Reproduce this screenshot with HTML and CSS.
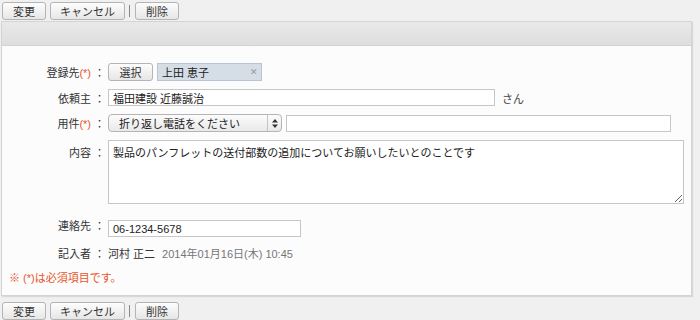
FILE: index.html
```html
<!DOCTYPE html>
<html lang="ja">
<head>
    <meta charset="UTF-8">
    <title>予定の変更</title>
    <link rel="stylesheet" href="styles.css">
</head>
<body>
    <div class="toolbar">
        <button class="btn btn-sm">変更</button>
        <button class="btn btn-lg">キャンセル</button>
        <span class="sep"></span>
        <button class="btn btn-sm">削除</button>
    </div>

    <div class="panel">
        <div class="panel-head"></div>
        <div class="panel-body">
            <div class="form">
                <div class="label">登録先<span class="req">(*)</span></div>
                <div class="colon">：</div>
                <div class="field">
                    <button class="btn btn-pick">選択</button>
                    <span class="chip">上田 恵子<span class="chip-x">✕</span></span>
                </div>

                <div class="label">依頼主</div>
                <div class="colon">：</div>
                <div class="field">
                    <input class="input input-client" type="text" value="福田建設 近藤誠治">
                    <span class="suffix">さん</span>
                </div>

                <div class="label">用件<span class="req">(*)</span></div>
                <div class="colon">：</div>
                <div class="field">
                    <div class="select">
                        <span>折り返し電話をください</span>
                        <span class="select-arrow">
                            <svg width="6" height="9" viewBox="0 0 6 9"><path d="M3 0 L6 3.5 H0 Z M3 9 L6 5.5 H0 Z" fill="#333"/></svg>
                        </span>
                    </div>
                    <input class="input input-subject" type="text">
                </div>

                <div class="label label-top">内容</div>
                <div class="colon label-top">：</div>
                <div class="field">
                    <textarea class="textarea">製品のパンフレットの送付部数の追加についてお願いしたいとのことです</textarea>
                </div>

                <div class="label">連絡先</div>
                <div class="colon">：</div>
                <div class="field field-gap">
                    <input class="input input-tel" type="text" value="06-1234-5678">
                </div>

                <div class="label">記入者</div>
                <div class="colon">：</div>
                <div class="field">
                    <span class="writer">河村 正二</span>
                    <span class="stamp">2014年01月16日(木) 10:45</span>
                </div>
            </div>
            <p class="note">※ (*)は必須項目です。</p>
        </div>
    </div>

    <div class="toolbar toolbar-bottom">
        <button class="btn btn-sm">変更</button>
        <button class="btn btn-lg">キャンセル</button>
        <span class="sep"></span>
        <button class="btn btn-sm">削除</button>
    </div>
</body>
</html>
```

FILE: styles.css
```css
body {
    margin: 0;
    padding: 0 8px 0 1px;
    background-color: #f0f0f0;
    font-family: "Liberation Sans", "Noto Sans CJK JP", sans-serif;
    font-size: 11px;
    color: #333;
}

.toolbar {
    display: flex;
    align-items: center;
    height: 21px;
    padding-left: 1px;
}

.toolbar-bottom {
    margin-top: 4px;
}

.btn {
    height: 18px;
    padding: 0;
    border: 1px solid #b4b4b4;
    border-radius: 3px;
    background: linear-gradient(#fdfdfd, #e6e6e6);
    font-family: "Liberation Sans", "Noto Sans CJK JP", sans-serif;
    font-size: 11px;
    color: #333;
    cursor: pointer;
}

.btn-sm {
    width: 44px;
}

.btn-lg {
    width: 75px;
    margin-left: 4px;
}

.sep {
    width: 1px;
    height: 12px;
    background-color: #888;
    margin: 0 5px 0 4px;
}

.panel {
    border: 1px solid #d4d4d4;
    background-color: #fcfcfc;
    box-shadow: 1px 1px 1px #d8d8d8;
}

.panel-head {
    height: 23px;
    background: linear-gradient(#e9e9e9, #dedede);
    border-bottom: 1px solid #d2d2d2;
}

.panel-body {
    padding: 17px 0 10px 0;
}

.form {
    display: grid;
    grid-template-columns: 89px 17px 1fr;
    row-gap: 8px;
    align-items: center;
}

.label {
    text-align: right;
    color: #333;
}

.req {
    color: #e8562a;
}

.colon {
    text-align: center;
}

.label-top {
    align-self: start;
    padding-top: 4px;
}

.field {
    display: flex;
    align-items: center;
    gap: 4px;
}

.btn-pick {
    width: 45px;
}

.chip {
    display: flex;
    align-items: center;
    justify-content: space-between;
    width: 96px;
    height: 16px;
    padding: 0 3px 0 4px;
    background-color: #d5dee7;
    border: 1px solid #b8c4d0;
    color: #222;
    font-size: 11px;
}

.chip-x {
    color: #999;
    font-size: 9px;
}

.input {
    height: 15px;
    padding: 0 4px;
    border: 1px solid #c6c6c6;
    background-color: #fff;
    font-family: "Liberation Sans", "Noto Sans CJK JP", sans-serif;
    font-size: 11px;
    color: #222;
    outline: none;
}

.input-client {
    width: 377px;
}

.suffix {
    margin-left: 3px;
    color: #444;
}

.select {
    box-sizing: border-box;
    display: flex;
    align-items: center;
    justify-content: space-between;
    width: 174px;
    height: 18px;
    padding-left: 10px;
    border: 1px solid #b4b4b4;
    border-radius: 4px;
    background: linear-gradient(#fcfcfc, #e9e9e9);
    color: #222;
}

.select-arrow {
    display: flex;
    align-items: center;
    justify-content: center;
    width: 13px;
    height: 100%;
    border-left: 1px solid #c4c4c4;
}

.input-subject {
    width: 375px;
}

.textarea {
    box-sizing: border-box;
    width: 576px;
    height: 64px;
    margin: 0;
    padding: 3px 4px;
    border: 1px solid #c6c6c6;
    background-color: #fff;
    font-family: "Liberation Sans", "Noto Sans CJK JP", sans-serif;
    font-size: 11px;
    color: #222;
    resize: vertical;
}

.field-gap {
    margin-top: 8px;
}

.input-tel {
    width: 183px;
}

.writer {
    color: #333;
}

.stamp {
    margin-left: 3px;
    color: #777;
}

.note {
    margin: 8px 0 0 7px;
    color: #e8562a;
}
```
